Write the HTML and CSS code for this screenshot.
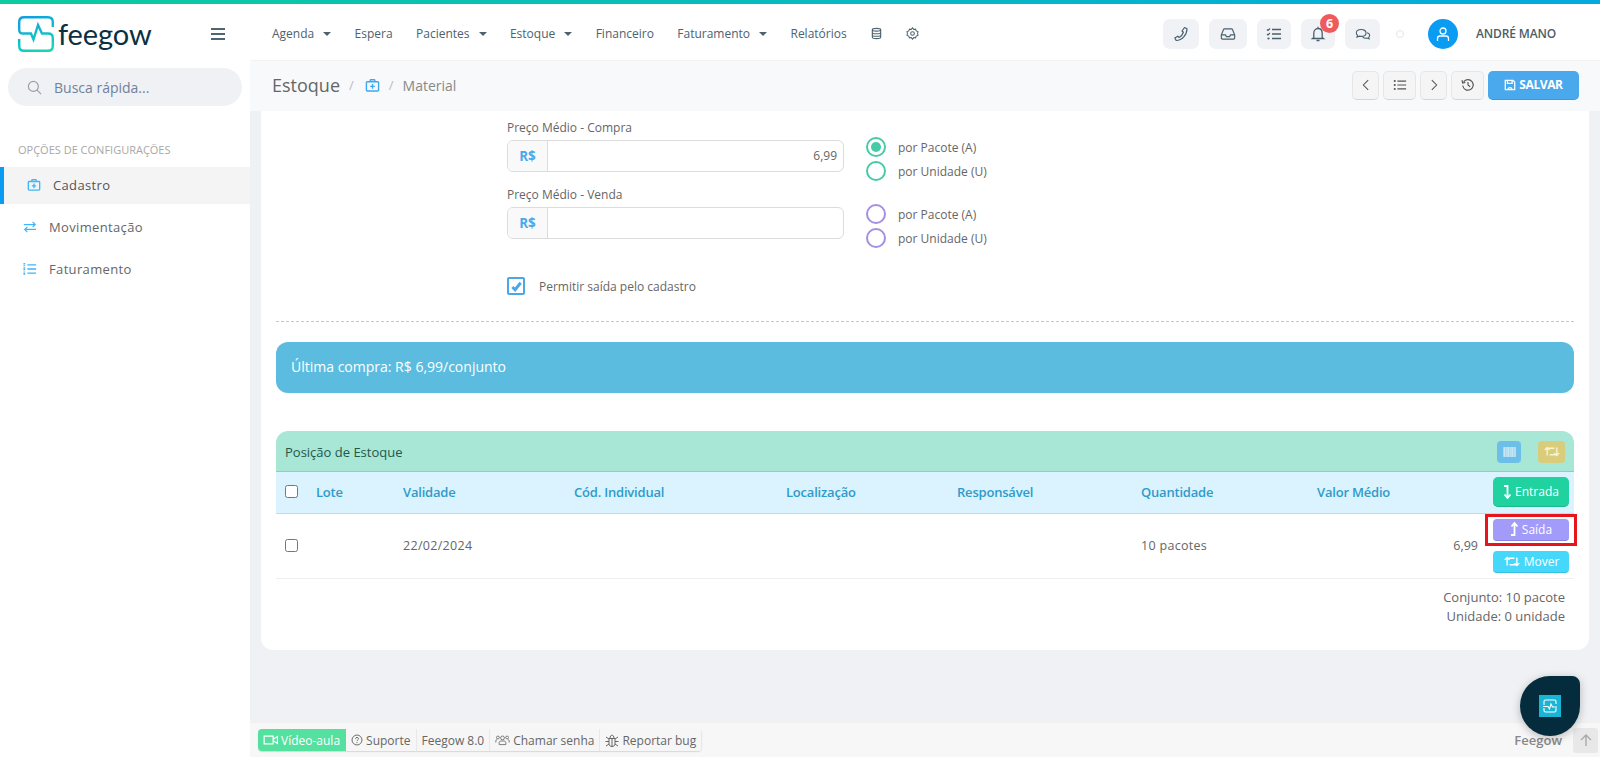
FILE: index.html
```html
<!DOCTYPE html>
<html lang="pt-BR">
<head>
<meta charset="utf-8">
<title>Feegow - Estoque</title>
<link rel="stylesheet" href="styles.css">
</head>
<body>
<svg class="defs" width="0" height="0" aria-hidden="true">
  <defs>
    <linearGradient id="logoGrad" gradientUnits="userSpaceOnUse" x1="8" y1="0" x2="22" y2="36">
      <stop offset="0" stop-color="#0f9fe2"/>
      <stop offset="1" stop-color="#16d6b4"/>
    </linearGradient>
    <symbol id="i-case" viewBox="0 0 16 16"><path d="M5.500 4V2.600c0-.5.4-.8.8-.8h3.400c.4 0 .8.300.8.800V4M2.400 4h11.200c.5 0 .9.400.9.900v8c0 .5-.4.900-.9.900H2.400c-.5 0-.9-.4-.9-.9v-8c0-.5.400-.9.900-.9zM8 6.400v5M5.500 8.900h5" fill="none" stroke="currentColor" stroke-width="1.500"/></symbol>
    <symbol id="i-swap" viewBox="0 0 16 16"><path d="M1 5.200h13M11 2.200l3 3-3 3M15 10.800H2M5 7.800l-3 3 3 3" fill="none" stroke="currentColor" stroke-width="1.400"/></symbol>
    <symbol id="i-list" viewBox="0 0 16 16"><path d="M5 3.200h10M5 8h10M5 12.800h10" fill="none" stroke="currentColor" stroke-width="1.500"/><path d="M1.500 1.200v4M1.500 6v4M1.500 10.800v4" fill="none" stroke="currentColor" stroke-width="2" stroke-dasharray="1.300 .5"/></symbol>
    <symbol id="i-retweet" viewBox="0 0 20 16"><path d="M4 13V4h9M1 6l3-3 3 3M16 3v9H7M13 10l3 3 3-3" fill="none" stroke="currentColor" stroke-width="1.700"/></symbol>
  </defs>
</svg>
<div class="topline"></div>
<header class="topbar">
  <div class="brand">
    <svg class="logo" viewBox="0 0 36 36" aria-hidden="true">
      <path d="M34.800 11V6c0-3-1.800-4.800-4.800-4.800H6C3 1.200 1.200 3 1.200 6v8c0 2 1.300 3.500 3.800 3.500h8l2.500 6L20 9l4 8.500h6c3 0 4.800 1.500 4.800 4.500v8c0 3-1.800 4.800-4.800 4.800H6c-3 0-4.800-1.800-4.800-4.800v-7" fill="none" stroke="url(#logoGrad)" stroke-width="2.400"/>
    </svg>
    <span class="wordmark">feegow</span>
    <button class="burger" aria-label="Menu"><span></span><span></span><span></span></button>
  </div>
  <nav class="mainnav">
    <a class="navitem caret">Agenda</a>
    <a class="navitem">Espera</a>
    <a class="navitem caret">Pacientes</a>
    <a class="navitem caret">Estoque</a>
    <a class="navitem">Financeiro</a>
    <a class="navitem caret">Faturamento</a>
    <a class="navitem">Relatórios</a>
    <svg class="navicon" viewBox="0 0 14 14" aria-hidden="true"><path d="M2.500 3c0-2 9-2 9 0v8c0 2-9 2-9 0zM2.500 3c0 2 9 2 9 0M2.500 5.800c0 2 9 2 9 0M2.500 8.500c0 2 9 2 9 0" fill="none" stroke="#4d626e" stroke-width="1.200"/></svg>
    <svg class="navicon" viewBox="0 0 14 14" aria-hidden="true"><path d="M7 1l1.300 1.600 2-.3.700 1.900 1.900.8-.4 2 .4 2-1.900.8-.7 1.900-2-.3L7 13l-1.300-1.600-2 .3-.7-1.900-1.900-.8.4-2-.4-2L3 4.200l.7-1.900 2 .3z" fill="none" stroke="#4d626e" stroke-width="1.100"/><circle cx="7" cy="7" r="2" fill="none" stroke="#4d626e" stroke-width="1.100"/></svg>
  </nav>
  <div class="tools">
    <button class="tool tool-phone" aria-label="Telefone"><svg viewBox="0 0 16 16"><path d="M11.500 1.500l2.500 1.200C14 9 9 14.500 3.200 14.500L1.800 12l3-1.800 1.300 1.300c2-1 3.600-3 4.300-5.200L9 5z" fill="none" stroke="#48606e" stroke-width="1.200" stroke-linejoin="round"/></svg></button>
    <button class="tool tool-inbox" aria-label="Caixa"><svg viewBox="0 0 18 16"><path d="M1.500 9l2.500-6c.2-.5.5-.7 1-.7h8c.5 0 .8.200 1 .7l2.500 6v3.500c0 .8-.5 1.200-1.200 1.200H2.700c-.7 0-1.200-.4-1.200-1.200zM1.500 9h4.700l1 2h3.600l1-2h4.700" fill="none" stroke="#48606e" stroke-width="1.300"/></svg></button>
    <button class="tool tool-tasks" aria-label="Tarefas"><svg viewBox="0 0 16 16"><path d="M6 3.500h9M6 8h9M6 12.500h9" stroke="#48606e" stroke-width="1.300" fill="none"/><path d="M1 3.500l1 1 2-2M1 8l1 1 2-2" stroke="#48606e" stroke-width="1.100" fill="none"/><circle cx="2.500" cy="12.500" r="1.100" fill="#48606e"/></svg></button>
    <button class="tool tool-bell" aria-label="Notificações"><svg viewBox="0 0 16 16"><path d="M8 .8v1.400M3.800 11.500V7.200C3.800 4.500 5.500 2.500 8 2.500s4.200 2 4.200 4.700v4.300l1.300 1H2.500zM6.500 14.500h3" fill="none" stroke="#48606e" stroke-width="1.300"/></svg><span class="badge">6</span></button>
    <button class="tool tool-chat" aria-label="Mensagens"><svg viewBox="0 0 18 16"><path d="M7 3C3.800 3 1.500 4.700 1.500 6.800c0 1 .5 1.800 1.300 2.500L2.200 11.500l2.700-1.100c.7.200 1.400.3 2.100.3 3.200 0 5.400-1.700 5.400-3.900S10.200 3 7 3z" fill="none" stroke="#48606e" stroke-width="1.200"/><path d="M13.500 6.500c1.900.5 3 1.700 3 3 0 .9-.4 1.600-1.100 2.200l.5 1.800-2.300-1c-1.800.4-3.800 0-4.900-1.100" fill="none" stroke="#48606e" stroke-width="1.200"/></svg></button>
    <span class="status-dot"></span>
    <span class="avatar"><svg viewBox="0 0 16 16"><circle cx="8" cy="5" r="3" fill="none" stroke="#fff" stroke-width="1.300"/><path d="M2.500 15v-2.500c0-1.500 1-2.500 2.500-2.500h6c1.500 0 2.500 1 2.500 2.500V15" fill="none" stroke="#fff" stroke-width="1.300"/></svg></span>
    <span class="username">ANDRÉ MANO</span>
  </div>
</header>
<div class="body">
  <aside class="sidebar">
    <div class="search">
      <svg viewBox="0 0 16 16" aria-hidden="true"><circle cx="6.800" cy="6.800" r="5.300" fill="none" stroke="#9aa0a6" stroke-width="1.300"/><path d="M10.800 10.800l4.200 4.200" stroke="#9aa0a6" stroke-width="1.300"/></svg>
      <span>Busca rápida...</span>
    </div>
    <div class="sidehead">OPÇÕES DE CONFIGURAÇÕES</div>
    <a class="sideitem active"><svg><use href="#i-case"/></svg>Cadastro</a>
    <a class="sideitem"><svg><use href="#i-swap"/></svg>Movimentação</a>
    <a class="sideitem"><svg><use href="#i-list"/></svg>Faturamento</a>
  </aside>
  <main class="main">
    <div class="subbar">
      <h1 class="crumb-title">Estoque</h1>
      <span class="slash">/</span>
      <svg class="crumb-icon"><use href="#i-case"/></svg>
      <span class="slash">/</span>
      <span class="crumb-leaf">Material</span>
      <div class="actions">
        <button class="act act-nav" aria-label="Anterior"><svg viewBox="0 0 12 16"><path d="M8.500 2.500L3 8l5.500 5.500" fill="none" stroke="#555" stroke-width="1.200"/></svg></button>
        <button class="act act-list" aria-label="Lista"><svg viewBox="0 0 16 16"><path d="M5 3.500h10M5 8h10M5 12.500h10" stroke="#555" stroke-width="1.300" fill="none"/><circle cx="2" cy="3.500" r="1.200" fill="#555"/><circle cx="2" cy="8" r="1.200" fill="#555"/><circle cx="2" cy="12.500" r="1.200" fill="#555"/></svg></button>
        <button class="act act-nav" aria-label="Próximo"><svg viewBox="0 0 12 16"><path d="M3.500 2.500L9 8l-5.500 5.500" fill="none" stroke="#555" stroke-width="1.200"/></svg></button>
        <button class="act act-hist" aria-label="Histórico"><svg viewBox="0 0 16 16"><path d="M3 4.500A6 6 0 1 1 2 8.500M1.200 2.500l.6 3.200 3.200-.6M8 4.500V8l2.500 2" fill="none" stroke="#555" stroke-width="1.300"/></svg></button>
        <button class="save"><svg viewBox="0 0 14 14" aria-hidden="true"><path d="M1.500 1.500h9l2 2v9h-11zM4 1.500v3.500h5.500v-3.500M4.500 12.500a2.500 2.500 0 1 1 5 0" fill="none" stroke="#fff" stroke-width="1.500"/></svg>SALVAR</button>
      </div>
    </div>
    <div class="content">
      <section class="card">
        <div class="form">
          <div class="price-row">
            <div class="field">
              <label class="field-label">Preço Médio - Compra</label>
              <div class="inputgroup"><span class="addon">R$</span><span class="input">6,99</span></div>
            </div>
            <div class="radios radios-green">
              <div class="radio-line"><span class="radio checked"></span>por Pacote (A)</div>
              <div class="radio-line"><span class="radio"></span>por Unidade (U)</div>
            </div>
          </div>
          <div class="price-row">
            <div class="field">
              <label class="field-label">Preço Médio - Venda</label>
              <div class="inputgroup"><span class="addon">R$</span><span class="input"></span></div>
            </div>
            <div class="radios radios-purple">
              <div class="radio-line"><span class="radio"></span>por Pacote (A)</div>
              <div class="radio-line"><span class="radio"></span>por Unidade (U)</div>
            </div>
          </div>
          <div class="permit">
            <span class="bigcheck"><svg viewBox="0 0 14 14" aria-hidden="true"><path d="M2.500 7.500l3 3 6-7.500" fill="none" stroke="#4aa8e8" stroke-width="3.200"/></svg></span>
            Permitir saída pelo cadastro
          </div>
        </div>
        <hr class="dashed">
        <div class="alert">Última compra: R$ 6,99/conjunto</div>
        <div class="panel">
          <div class="panel-head">
            <span>Posição de Estoque</span>
            <span class="panel-tools">
              <span class="ptool ptool-blue"><svg viewBox="0 0 13 10" aria-hidden="true"><path d="M0 0h13v10H0z" fill="#a9d9f0"/><path d="M1.500 0v10M4 0v10M5.500 0v10M8 0v10M9.500 0v10M12 0v10" stroke="#c4e6f5" stroke-width="1"/></svg></span>
              <span class="ptool ptool-yellow"><svg><use href="#i-retweet"/></svg></span>
            </span>
          </div>
          <table class="stock">
            <thead>
              <tr>
                <th class="c-check"><span class="check check-head"></span></th>
                <th class="c-lote">Lote</th>
                <th class="c-val">Validade</th>
                <th class="c-cod">Cód. Individual</th>
                <th class="c-loc">Localização</th>
                <th class="c-resp">Responsável</th>
                <th class="c-qty">Quantidade</th>
                <th class="c-avg">Valor Médio</th>
                <th class="c-act"><button class="sbtn sbtn-in"><svg viewBox="0 0 9 14" aria-hidden="true"><path d="M1 1h3.500v12M1.500 9.500l3 3.500 3-3.500" fill="none" stroke="#fff" stroke-width="1.800"/></svg>Entrada</button></th>
              </tr>
            </thead>
            <tbody>
              <tr>
                <td><span class="check"></span></td>
                <td></td>
                <td>22/02/2024</td>
                <td></td>
                <td></td>
                <td></td>
                <td>10 pacotes</td>
                <td class="num">6,99</td>
                <td class="c-act cell-actions">
                  <span class="highlight"></span>
                  <button class="sbtn sbtn-out"><svg viewBox="0 0 9 14" aria-hidden="true"><path d="M1 13h3.500V1M1.500 4.500l3-3.500 3 3.500" fill="none" stroke="#fff" stroke-width="1.800"/></svg>Saída</button>
                  <button class="sbtn sbtn-move"><svg><use href="#i-retweet"/></svg>Mover</button>
                </td>
              </tr>
            </tbody>
          </table>
          <div class="totals">
            <div>Conjunto: 10 pacote</div>
            <div>Unidade: 0 unidade</div>
          </div>
        </div>
      </section>
    </div>
    <footer class="footer">
      <div class="fgroup">
        <a class="fitem fitem-video"><svg viewBox="0 0 18 14" aria-hidden="true"><path d="M1 2.500h10.500v9H1zM11.500 6l5-3v8l-5-3" fill="none" stroke="#fff" stroke-width="1.400"/></svg>Vídeo-aula</a>
        <a class="fitem"><svg viewBox="0 0 14 14" aria-hidden="true"><circle cx="7" cy="7" r="5.800" fill="none" stroke="#666" stroke-width="1.100"/><path d="M5.200 5.500C5.300 3.500 8.800 3.500 8.800 5.500 8.800 6.800 7 6.800 7 8.300M7 9.500v1.200" fill="none" stroke="#666" stroke-width="1.100"/></svg>Suporte</a>
        <a class="fitem">Feegow 8.0</a>
        <a class="fitem"><svg class="wide" viewBox="0 0 18 14" aria-hidden="true"><circle cx="9" cy="4.500" r="2.300" fill="none" stroke="#666"/><circle cx="3.500" cy="4" r="1.700" fill="none" stroke="#666"/><circle cx="14.500" cy="4" r="1.700" fill="none" stroke="#666"/><path d="M5 12.500v-2c0-1.500 1-2.300 2-2.300h4c1 0 2 .8 2 2.300v2zM1 10V8c0-1 .7-1.500 1.500-1.500M17 10V8c0-1-.7-1.500-1.500-1.500" fill="none" stroke="#666"/></svg>Chamar senha</a>
        <a class="fitem"><svg class="bug" viewBox="0 0 14 14" aria-hidden="true"><path d="M4 5.500h6V11c0 1.500-1.300 2.500-3 2.500S4 12.500 4 11zM5 5.500c0-4.500 4-4.500 4 0M7 5.500v8M1 4l3 2M13 4l-3 2M.5 8.500H4M13.500 8.500H10M1 13l3-2M13 13l-3-2" fill="none" stroke="#666"/></svg>Reportar bug</a>
      </div>
      <span class="fbrand">Feegow</span>
      <button class="totop" aria-label="Topo"><svg viewBox="0 0 14 14"><path d="M7 13V2M2 7l5-5 5 5" fill="none" stroke="#aaa" stroke-width="1.400"/></svg></button>
    </footer>
    <button class="fab" aria-label="Assistente">
      <span class="fab-inner"><svg viewBox="0 0 22 22"><path d="M5 10V6.500C5 5.500 5.700 5 6.500 5h9c.8 0 1.500.5 1.500 1.500V9M17 13v2.500c0 1-.7 1.500-1.500 1.500h-9C5.700 17 5 16.500 5 15.500V13M4 11.500h5l1.500 2.500 1.500-5 1.500 3H18" fill="none" stroke="#fff" stroke-width="1.100"/></svg></span>
    </button>
  </main>
</div>
</body>
</html>
```
FILE: styles.css
```css
* { box-sizing: border-box; }
html, body { margin: 0; height: 757px; overflow: hidden; }
body {
  font-family: "Open Sans", "Noto Sans", sans-serif;
  font-size: 12px;
  color: #666;
  background: #fff;
  display: flex;
  flex-direction: column;
}
button { font-family: inherit; border: 0; cursor: pointer; padding: 0; }
.defs { position: absolute; }

.topline { height: 4px; flex: none; background: linear-gradient(90deg, #0bcb9f 0%, #02aadf 100%); }

.topbar { height: 56px; flex: none; display: flex; align-items: center; background: #fff; padding-top: 3px; }
.brand { width: 250px; flex: none; display: flex; align-items: center; padding-left: 18px; height: 100%; }
.logo { width: 36px; height: 36px; flex: none; }
.wordmark { font-family: "Lato", sans-serif; font-size: 29px; color: #0c3042; margin-left: 4px; line-height: 36px; width: 92px; letter-spacing: -.1px; flex: none; }
.burger { margin-left: 61px; width: 14px; background: none; display: flex; flex-direction: column; gap: 3px; }
.burger span { height: 2px; background: #4f6672; display: block; }

.mainnav { display: flex; align-items: center; gap: 23.400px; margin-left: 22px; color: #4d626e; font-size: 12px; }
.navitem { white-space: nowrap; }
.caret::after { content: ""; display: inline-block; margin-left: 9px; vertical-align: 2px; border-left: 4px solid transparent; border-right: 4px solid transparent; border-top: 4px solid #4d626e; }
.navicon { width: 13px; height: 13px; }

.tools { margin-left: auto; display: flex; align-items: center; gap: 10px; padding-right: 44px; }
.tool { height: 30px; width: 34px; border-radius: 7px; background: #f0f2f6; display: flex; align-items: center; justify-content: center; position: relative; }
.tool svg { width: 16px; height: 16px; }
.tool-phone { width: 36px; }
.tool-inbox { width: 38px; }
.tool-chat { width: 35px; }
.badge { position: absolute; top: -5px; right: -4px; width: 19px; height: 19px; border-radius: 50%; background: #ef5b5b; color: #fff; font-size: 12.500px; font-weight: 700; line-height: 19px; text-align: center; }
.status-dot { width: 8px; height: 8px; border-radius: 50%; border: 1px solid #e3e5e8; margin-left: 6px; }
.avatar { width: 30px; height: 30px; border-radius: 50%; background: #0a9cf2; display: flex; align-items: center; justify-content: center; margin-left: 14px; }
.avatar svg { width: 16px; height: 16px; }
.username { font-weight: 600; color: #4d5d68; margin-left: 8px; font-size: 12px; letter-spacing: -.15px; white-space: nowrap; }

.body { flex: 1; min-height: 0; display: flex; }
.sidebar { width: 250px; flex: none; background: #fff; }
.search { margin: 8px 8px 0; height: 38px; border-radius: 19px; background: #eff1f5; display: flex; align-items: center; padding-left: 19px; gap: 12px; color: #6f829c; font-size: 14px; }
.search svg { width: 15px; height: 15px; }
.sidehead { margin: 36px 0 0 18px; font-size: 11px; color: #a7a7a7; line-height: 16px; }
.sideitem { display: flex; align-items: center; height: 37px; margin-top: 5px; padding-left: 23px; gap: 12px; font-size: 13px; color: #666; letter-spacing: .35px; padding-bottom: 2px; }
.sideitem svg { width: 14px; height: 14px; color: #3fb6f5; }
.sideitem.active { margin-top: 9px; background: #f4f4f5; border-left: 4px solid #0a9cf2; color: #555; padding-left: 23px; }

.main { flex: 1; min-width: 0; display: flex; flex-direction: column; background: #eff1f5; position: relative; }
.subbar { height: 51px; flex: none; display: flex; align-items: center; background: #f8f9fb; padding: 0 21px 2px 22px; border-top: 1px solid #f1f2f4; }
.crumb-title { margin: 0; font-size: 18px; font-weight: 400; color: #666; }
.slash { color: #bbb; margin: 0 9px; font-size: 13px; }
.crumb-icon { width: 15px; height: 15px; color: #3fa7f0; margin-left: 2px; }
.crumb-leaf { font-size: 14px; color: #888; }
.actions { margin-left: auto; display: flex; gap: 4px; }
.act { height: 29px; border-radius: 5px; background: #f5f5f5; border: 1px solid #e6e6e6; border-bottom-color: #d5d5d5; display: flex; align-items: center; justify-content: center; }
.act svg { width: 14px; height: 14px; }
.act-nav { width: 27px; }
.act-list { width: 33px; }
.act-hist { width: 33px; }
.save { height: 29px; width: 91px; border-radius: 5px; background: #4aa8ec; border-bottom: 1px solid #3f98da; color: #fff; font-size: 12px; font-weight: 700; letter-spacing: -.4px; display: flex; align-items: center; justify-content: center; gap: 3px; }
.save svg { width: 12px; height: 12px; }

.content { flex: 1; min-height: 0; padding: 0 11px; overflow: hidden; }
.card { background: #fff; border-radius: 0 0 12px 12px; padding: 0 15px; height: 539px; }

.form { padding-left: 231px; padding-top: 6px; }
.price-row { display: flex; align-items: flex-start; height: 67px; }
.field { width: 337px; flex: none; }
.field-label { display: block; font-size: 12px; color: #666; font-weight: 500; line-height: 18px; height: 23px; padding-top: 2px; }
.inputgroup { display: flex; height: 32px; border: 1px solid #dcdcdc; border-radius: 6px; overflow: hidden; }
.addon { width: 40px; flex: none; background: #f9f9f9; border-right: 1px solid #dcdcdc; color: #4aa8ec; font-weight: 700; text-align: center; line-height: 30px; font-size: 13.500px; }
.input { flex: 1; text-align: right; padding-right: 6px; line-height: 30px; color: #666; }
.radios { margin-left: 22px; padding-top: 18px; }
.radio-line { display: flex; align-items: center; height: 24px; color: #666; font-weight: 500; white-space: nowrap; gap: 12px; }
.radio { width: 20px; height: 20px; border-radius: 50%; border: 2px solid #46cba6; display: block; position: relative; flex: none; background: #fff; }
.radio.checked::after { content: ""; position: absolute; inset: 3px; border-radius: 50%; background: #46cba6; }
.radios-purple .radio { border-color: #a58fe3; }
.permit { margin-top: 26px; display: flex; align-items: center; gap: 14px; font-weight: 500; height: 18px; }
.bigcheck { width: 18px; height: 18px; border: 2px solid #4aa8e8; border-radius: 2px; display: flex; align-items: center; justify-content: center; }
.bigcheck svg { width: 13px; height: 13px; }

.dashed { border: 0; border-top: 1px dashed #c8c8c8; margin: 26px 0 20px; }
.alert { height: 51px; border-radius: 12px; background: #5bbce0; color: #fff; font-size: 14px; font-weight: 500; line-height: 50px; padding-left: 15px; }

.panel { margin-top: 38px; }
.panel-head { height: 41px; border-radius: 12px 12px 0 0; background: #a8e6d5; border-bottom: 1px solid #7fd6c0; color: #24584a; font-size: 13px; font-weight: 500; display: flex; align-items: center; padding: 1px 9px 0; justify-content: space-between; }
.panel-tools { display: flex; gap: 17px; }
.ptool { height: 22px; border-radius: 4px; display: flex; align-items: center; justify-content: center; }
.ptool-blue { width: 24px; background: #6cbfe8; }
.ptool-blue svg { width: 13px; height: 10px; }
.ptool-yellow { width: 27px; background: #d9cd7b; color: #f7f3d0; }
.ptool-yellow svg { width: 16px; height: 13px; }

.stock { width: 100%; border-collapse: collapse; table-layout: fixed; }
.stock th { height: 41px; background: #daf3fe; border-bottom: 1px solid #b2e1f2; color: #2f9bc9; font-size: 13px; font-weight: 600; letter-spacing: -.2px; text-align: left; padding: 0 9px; }
.stock td { height: 65px; border-bottom: 1px solid #eee; padding: 0 9px; font-size: 12.500px; color: #666; letter-spacing: .3px; }
.c-check { width: 31px; }
.c-lote { width: 87px; }
.c-val { width: 171px; }
.c-cod { width: 212px; }
.c-loc { width: 171px; }
.c-resp { width: 184px; }
.c-qty { width: 176px; }
.c-avg { width: 179px; }
.stock th.c-act, .stock td.c-act { padding: 0 5px 0 6px; }
.stock td.num { text-align: right; letter-spacing: 0; }
.cell-actions { position: relative; }
.check { display: block; width: 13px; height: 13px; border: 1px solid #767676; border-radius: 2.500px; background: #fff; }
.check-head { margin-top: -2px; }
.sbtn { width: 76px; display: flex; align-items: center; justify-content: center; gap: 3px; color: #fff; font-size: 12px; font-weight: 500; border-radius: 4px; }
.sbtn svg { height: 14px; width: 9px; }
.sbtn-in { height: 30px; background: #1fd29f; border-bottom: 1px solid #19b98b; border-radius: 5px; }
.sbtn-out { height: 22px; background: #a29bfa; border-bottom: 1px solid #8a83e0; position: relative; }
.sbtn-move { height: 22px; background: #45d8fb; border-bottom: 1px solid #36c1e2; margin-top: 10px; }
.sbtn-move svg { width: 18px; height: 13px; }
.highlight { position: absolute; left: -2px; top: 0; width: 92px; height: 32px; border: 3px solid #e8141c; }

.totals { text-align: right; padding: 9px 9px 0 0; font-weight: 500; font-size: 13px; line-height: 19px; color: #666; }

.footer { height: 35px; flex: none; background: #f7f7f7; border-top: 1px solid #f0f0f0; display: flex; align-items: center; padding: 0 2px 0 8px; }
.fgroup { display: flex; height: 22px; border-radius: 4px; overflow: hidden; box-shadow: 0 1px 1px #d8d8d8; }
.fitem { display: flex; align-items: center; gap: 3px; padding: 0 5px; background: #f6f6f6; border-right: 1px solid #e8e8e8; font-size: 12px; color: #666; white-space: nowrap; }
.fitem svg { width: 12px; height: 12px; }
.fitem svg.wide { width: 15px; }
.fitem svg.bug { width: 14px; height: 14px; }
.fitem-video { background: #54e09e; color: #fff; border: 0; font-weight: 500; gap: 2px; padding-right: 6px; }
.fitem-video svg { width: 16px; }
.fbrand { margin-left: auto; font-size: 13px; font-weight: 600; color: #888; margin-right: 11px; }
.totop { width: 25px; height: 25px; border-radius: 3px; background: #e8e8e8; display: flex; align-items: center; justify-content: center; }
.totop svg { width: 14px; height: 14px; }

.fab { position: absolute; left: 1270px; top: 616px; width: 60px; height: 60px; border-radius: 50% 8px 50% 50%; background: #042c3d; box-shadow: 0 2px 8px rgba(0,0,0,.25); display: flex; align-items: center; justify-content: center; }
.fab-inner { width: 22px; height: 22px; background: #1ab5d6; display: block; }
.fab-inner svg { display: block; width: 22px; height: 22px; }
```
